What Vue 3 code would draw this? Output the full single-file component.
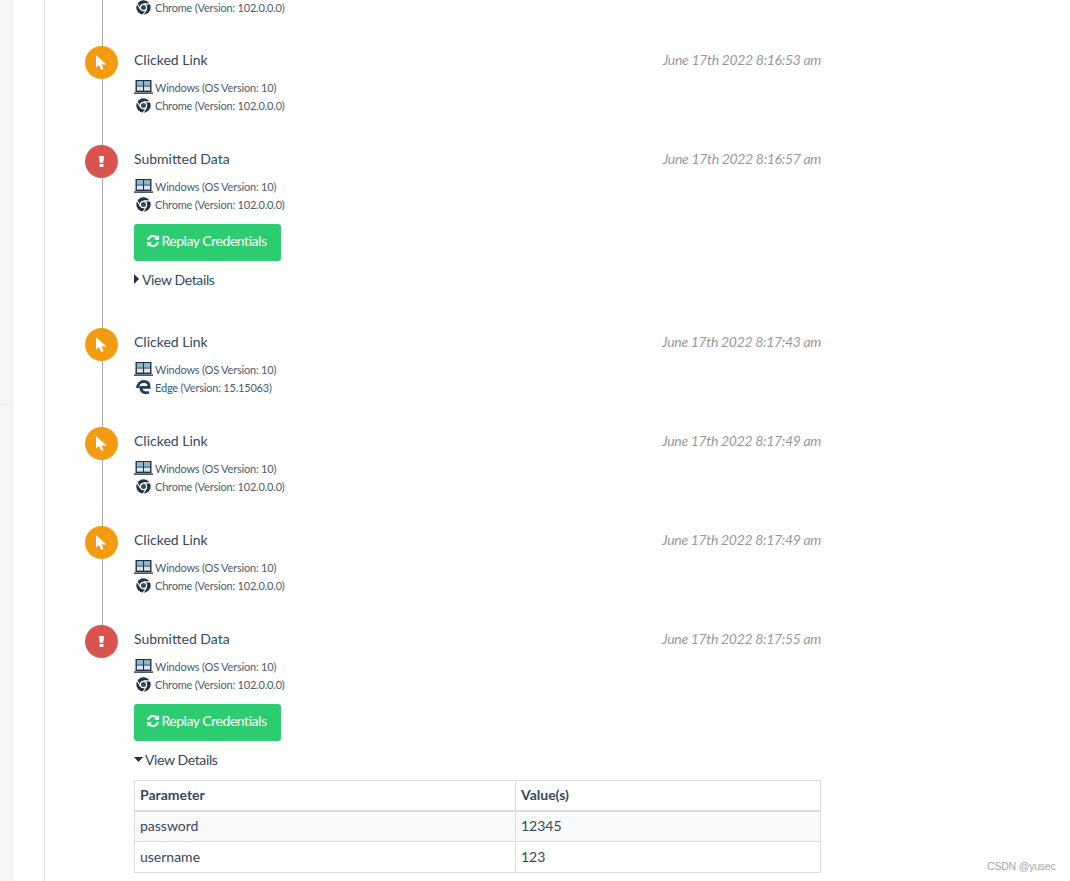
<script setup>
const events = [
  { kind: 'click', title: 'Clicked Link', date: 'June 17th 2022 8:16:53 am', browser: 'Chrome', version: '102.0.0.0' },
  { kind: 'submit', title: 'Submitted Data', date: 'June 17th 2022 8:16:57 am', browser: 'Chrome', version: '102.0.0.0', details: 'closed' },
  { kind: 'click', title: 'Clicked Link', date: 'June 17th 2022 8:17:43 am', browser: 'Edge', version: '15.15063' },
  { kind: 'click', title: 'Clicked Link', date: 'June 17th 2022 8:17:49 am', browser: 'Chrome', version: '102.0.0.0' },
  { kind: 'click', title: 'Clicked Link', date: 'June 17th 2022 8:17:49 am', browser: 'Chrome', version: '102.0.0.0' },
  { kind: 'submit', title: 'Submitted Data', date: 'June 17th 2022 8:17:55 am', browser: 'Chrome', version: '102.0.0.0', details: 'open' }
]
const refreshPath = 'M1639 1056q0 5-1 7-64 268-268 434.5t-478 166.5q-146 0-282.5-55t-243.5-157l-129 129q-19 19-45 19t-45-19-19-45v-448q0-26 19-45t45-19h448q26 0 45 19t19 45-19 45l-137 137q71 66 161 102t187 36q134 0 250-65t186-179q11-17 53-117 8-23 30-23h192q13 0 22.5 9.5t9.5 22.5zm25-800v448q0 26-19 45t-45 19h-448q-26 0-45-19t-19-45 19-45l138-138q-148-137-349-137-134 0-250 65t-186 179q-11 17-53 117-8 23-30 23h-199q-13 0-22.5-9.5t-9.5-22.5v-7q65-268 270-434.5t480-166.5q146 0 284 55.5t245 156.5l130-129q19-19 45-19t45 19 19 45z'
</script>

<template>
  <div class="page">
    <aside class="rail"><div class="rail-top"></div></aside>
    <main class="main">
      <div class="lead">
        <div class="env">
          <svg class="ico" viewBox="0 0 19 19"><circle cx="9.500" cy="9.500" r="7.200" fill="#1f3345"/><path d="M9.500 5.900h6.500M6.400 11.300 3 5.500M12.600 11.300 9 17" stroke="#fff" stroke-width="1.100" fill="none"/><circle cx="9.500" cy="9.500" r="3.700" fill="#fff"/><circle cx="9.500" cy="9.500" r="2.500" fill="#2b4d68"/></svg>
          <span>Chrome (Version: 102.0.0.0)</span>
        </div>
      </div>
      <section v-for="(e, i) in events" :key="i" class="event" :class="[e.kind, { last: i === events.length - 1 }]">
        <div class="badge">
          <svg v-if="e.kind === 'click'" width="11" height="15" viewBox="0 0 11 15"><path d="M0 0V12.500L3 10 5.400 15 7.600 14 5.400 9.400H10.500Z" fill="#fff"/></svg>
          <svg v-else width="5" height="11" viewBox="0 0 5 11"><path d="M0 0H5L4.300 6.800H.7ZM.6 8h3.800v3H.6Z" fill="#fff"/></svg>
        </div>
        <div class="body">
          <div class="head">
            <span class="title">{{ e.title }}</span>
            <span class="date">{{ e.date }}</span>
          </div>
          <div class="env first">
            <svg class="ico win" viewBox="0 0 19 14">
              <rect x="2.200" y="0.700" width="14.600" height="10.600" fill="#dbe8f0" stroke="#1f3345" stroke-width="1.400"/>
              <path d="M3 1.500h6v3.600H3zM10 1.500h6v3.600h-6z" fill="#8fb9d1"/>
              <path d="M2.500 6h14M9.500 1v10" stroke="#1f3345" stroke-width="1.100"/>
              <rect x="0" y="12.400" width="19" height="1.400" fill="#1f3345"/>
            </svg>
            <span>Windows (OS Version: 10)</span>
          </div>
          <div class="env">
            <svg v-if="e.browser === 'Chrome'" class="ico" viewBox="0 0 19 19"><circle cx="9.500" cy="9.500" r="7.200" fill="#1f3345"/><path d="M9.500 5.900h6.500M6.400 11.300 3 5.500M12.600 11.300 9 17" stroke="#fff" stroke-width="1.100" fill="none"/><circle cx="9.500" cy="9.500" r="3.700" fill="#fff"/><circle cx="9.500" cy="9.500" r="2.500" fill="#2b4d68"/></svg>
            <svg v-else class="ico" viewBox="0 0 19 19"><path d="M3.500 10C3.700 6 6.500 3.500 10 3.500 13.500 3.500 15.200 6 15.200 9.300H6.800C6.600 13.500 10.500 16 15 14.300" fill="none" stroke="#1f3f5b" stroke-width="2.800"/></svg>
            <span><span :class="{ edge: e.browser === 'Edge' }">{{ e.browser }}</span> (Version: {{ e.version }})</span>
          </div>
          <template v-if="e.details">
            <button class="replay" type="button">
              <svg width="14" height="14" viewBox="0 0 1792 1792"><path :d="refreshPath" fill="#fff"/></svg>
              <span>Replay Credentials</span>
            </button>
            <div class="toggle" :class="e.details">
              <svg v-if="e.details === 'closed'" width="5" height="10" viewBox="0 0 5 10"><path d="M0 0 5 5 0 10Z" fill="#2a2a4a"/></svg>
              <svg v-else width="9" height="5" viewBox="0 0 9 5"><path d="M0 0H9L4.500 5Z" fill="#1f2d3d"/></svg>
              <span>View Details</span>
            </div>
            <table v-if="e.details === 'open'" class="params">
              <thead><tr><th>Parameter</th><th>Value(s)</th></tr></thead>
              <tbody>
                <tr><td>password</td><td>12345</td></tr>
                <tr><td>username</td><td>123</td></tr>
              </tbody>
            </table>
          </template>
        </div>
      </section>
    </main>
    <div class="mark">CSDN @yusec</div>
  </div>
</template>

<style>
html, body { margin: 0; background: #fff; overflow: hidden; }
</style>

<style scoped>
.page {
  position: relative;
  display: flex;
  height: 881px;
  overflow: hidden;
  background: #fff;
  color: #34495e;
  font-family: Lato, "Liberation Sans", sans-serif;
  font-size: 14px;
}
.rail { width: 14px; flex: none; background: #f5f5f5; }
.rail-top { height: 405px; border-bottom: 1px solid #ececec; box-sizing: border-box; }
.main {
  margin-left: 30px;
  width: 777px;
  flex: none;
  border-left: 1px solid #e2e2e2;
  position: relative;
}
.lead { padding: 0 0 0 89px; height: 49px; position: relative; }
.lead::before {
  content: "";
  position: absolute;
  left: 57px;
  top: 0;
  bottom: 0;
  width: 1px;
  background: #aaa;
}
.event {
  position: relative;
  display: flex;
  padding-left: 40px;
  min-height: 99px;
  box-sizing: border-box;
}
.event::before {
  content: "";
  position: absolute;
  left: 57px;
  top: 0;
  bottom: 0;
  width: 1px;
  background: #aaa;
}
.event.last::before { bottom: auto; height: 0; }
.badge {
  position: relative;
  width: 33px;
  height: 33px;
  margin-top: -3px;
  border-radius: 50%;
  display: flex;
  align-items: center;
  justify-content: center;
  flex: none;
}
.event.click .badge { background: #f39c12; }
.event.submit .badge { background: #d9534f; }
.body { margin-left: 16px; flex: 1; min-width: 0; }
.head {
  display: flex;
  justify-content: space-between;
  align-items: center;
  height: 20px;
}
.title { color: #34495e; }
.date { color: #999; font-style: italic; letter-spacing: -0.32px; padding-right: 1px; }
.env {
  display: flex;
  align-items: center;
  height: 18.5px;
  font-size: 11px;
  letter-spacing: -0.2px;
  color: #4a5d70;
  gap: 2px;
}
.env.first { margin-top: 9px; }
.lead .env { height: 14px; }
.ico { width: 19px; height: 19px; flex: none; }
.ico.win { height: 14px; }
.edge { color: #2b5b8a; }
.replay {
  display: flex;
  align-items: center;
  justify-content: center;
  gap: 1px;
  width: 147px;
  height: 37px;
  margin-top: 10px;
  padding: 0 2px 4px 0;
  border: 0;
  border-radius: 3px;
  background: #2ecc71;
  color: #fff;
  font: inherit;
  letter-spacing: -0.45px;
}
.toggle {
  display: flex;
  align-items: center;
  gap: 3px;
  height: 20px;
  margin-top: 8px;
  letter-spacing: -0.38px;
}
.toggle.open { gap: 2px; }
.event.submit .toggle.closed { margin-bottom: 42px; }
.params {
  margin-top: 11px;
  width: 687px;
  border-collapse: collapse;
  table-layout: fixed;
}
.params th, .params td {
  border: 1px solid #ddd;
  padding: 0 5px 1px;
  height: 31px;
  text-align: left;
  box-sizing: border-box;
}
.params th { height: 30px; }
.params th:first-child, .params td:first-child { width: 381px; }
.params th { font-weight: 700; color: #34495e; border-bottom-width: 2px; }
.params tbody tr:first-child td { background: #f9f9f9; }
.mark {
  position: absolute;
  left: 987px;
  top: 860px;
  font-size: 10.5px;
  letter-spacing: -0.2px;
  color: #a8a8a8;
  font-family: "Liberation Sans", sans-serif;
}
</style>
